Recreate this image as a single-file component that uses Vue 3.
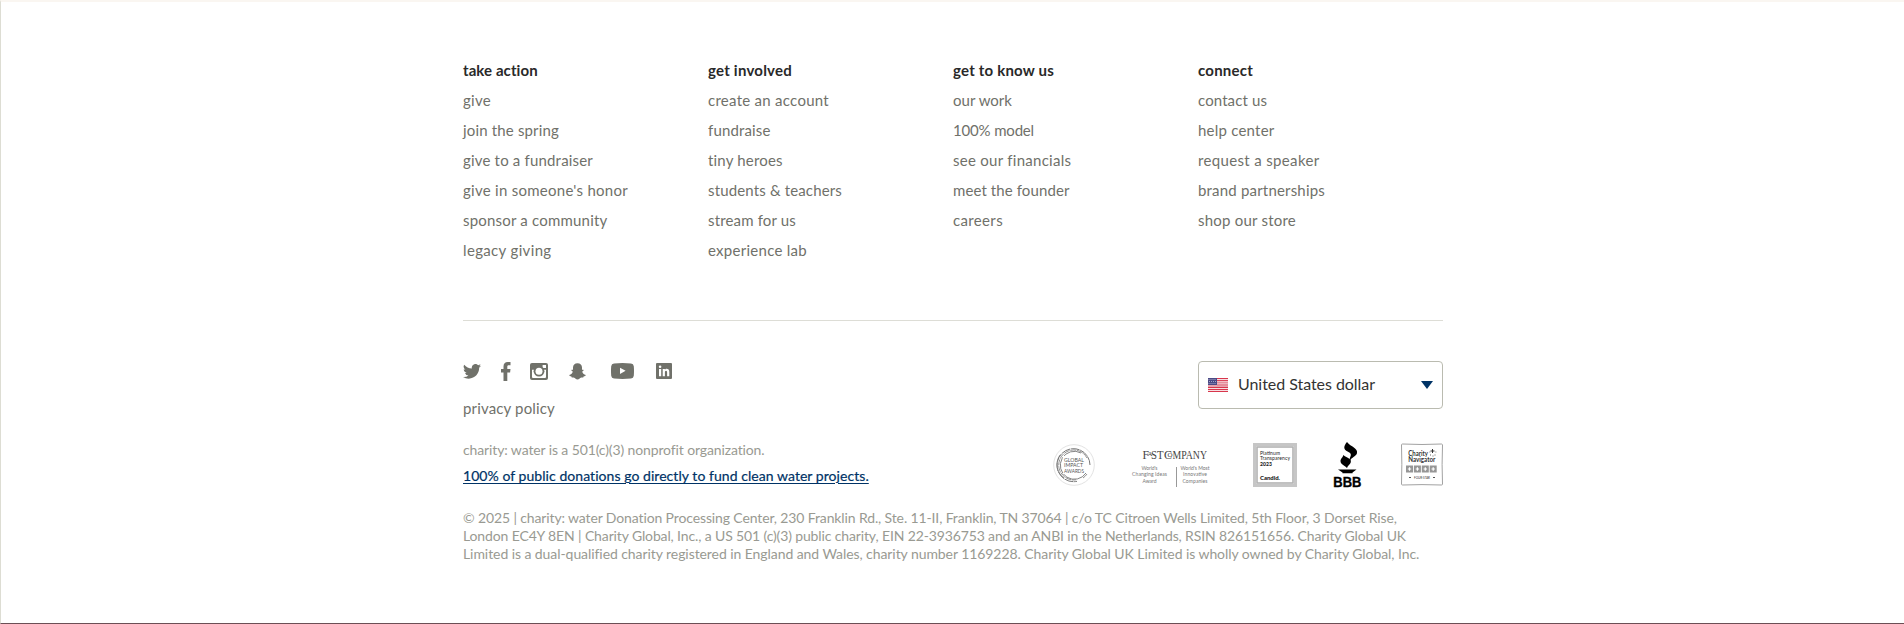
<script setup>
const columns = [
  { title: ['take action', 75], links: [['give', 28], ['join the spring', 96], ['give to a fundraiser', 130], ["give in someone's honor", 165], ['sponsor a community', 144.5], ['legacy giving', 88.5]] },
  { title: ['get involved', 84], links: [['create an account', 121], ['fundraise', 62.5], ['tiny heroes', 75], ['students & teachers', 134], ['stream for us', 88], ['experience lab', 99]] },
  { title: ['get to know us', 101], links: [['our work', 59], ['100% model', 81], ['see our financials', 118], ['meet the founder', 116.5], ['careers', 50]] },
  { title: ['connect', 55], links: [['contact us', 69], ['help center', 76.5], ['request a speaker', 121.5], ['brand partnerships', 127], ['shop our store', 98]] },
]
const legal = [
  ['© 2025 | charity: water Donation Processing Center, 230 Franklin Rd., Ste. 11-II, Franklin, TN 37064 | c/o TC Citroen Wells Limited, 5th Floor, 3 Dorset Rise,', 934],
  ['London EC4Y 8EN | Charity Global, Inc., a US 501 (c)(3) public charity, EIN 22-3936753 and an ANBI in the Netherlands, RSIN 826151656. Charity Global UK', 943],
  ['Limited is a dual-qualified charity registered in England and Wales, charity number 1169228. Charity Global UK Limited is wholly owned by Charity Global, Inc.', 956],
]
// Tracks a line of text so that it fills the given width.
const vFit = {
  mounted(el, { value }) {
    const natural = el.getBoundingClientRect().width
    el.style.letterSpacing = (value - natural) / el.textContent.length + 'px'
  },
}
</script>

<template>
  <footer class="footer">
    <div class="inner">
      <nav class="columns">
        <section v-for="c in columns" :key="c.title[0]" class="column">
          <h3><span v-fit="c.title[1]">{{ c.title[0] }}</span></h3>
          <ul>
            <li v-for="l in c.links" :key="l[0]"><a v-fit="l[1]">{{ l[0] }}</a></li>
          </ul>
        </section>
      </nav>

      <div class="middle">
        <div class="left">
          <div class="social">
            <svg class="tw" width="18" height="15" viewBox="0 0 24 20"><path d="M24 2.400a9.800 9.800 0 0 1-2.830.780A4.930 4.930 0 0 0 23.340.400a9.900 9.900 0 0 1-3.130 1.200 4.920 4.920 0 0 0-8.390 4.480C7.730 5.880 4.100 3.920 1.670.930a4.920 4.920 0 0 0 1.520 6.570 4.900 4.900 0 0 1-2.230-.610c-.050 2.280 1.580 4.410 3.950 4.890a4.900 4.900 0 0 1-2.220.080 4.930 4.930 0 0 0 4.600 3.420A9.900 9.900 0 0 1 0 17.320a13.900 13.900 0 0 0 7.550 2.210c9.140 0 14.300-7.720 13.990-14.640A10 10 0 0 0 24 2.400z" /></svg>
            <svg class="fb" width="10" height="19" viewBox="0 0 10 19"><path d="M2.500 19v-8.500H0V7h2.500V4.500C2.500 1.600 4 0 6.700 0H9.500v3.300H7.700C6.600 3.300 6.300 3.800 6.300 4.800V7h3.200l-.4 3.500H6.300V19z" /></svg>
            <svg class="ig" width="18" height="17" viewBox="0 0 18 17">
              <rect width="18" height="17" rx="2" />
              <path class="cut" d="M2 6.800h14V14a1 1 0 0 1-1 1H3a1 1 0 0 1-1-1zM12.600 2H16v3h-3.400z" />
              <circle cx="9" cy="8.200" r="5.400" />
              <circle class="cut" cx="9" cy="8.200" r="3.500" />
            </svg>
            <svg class="sc" width="17" height="17" viewBox="0 0 17 17"><path d="M8.500.2C11.300.2 13 2 13 4.500v2.200c.6.300 1.200-.2 1.600.3.300.6-.7 1.100-1.400 1.500.4 1.700 1.600 3 3.600 3.600 0 .9-1.100 1.200-2.200 1.400l-.4 1.100c-1.800-.3-2.600.2-3.500.9-1.400 1.200-3 1.200-4.400 0-.9-.7-1.700-1.200-3.500-.9l-.4-1.100C1.300 13.300.2 13 .2 12.100c2-.6 3.200-1.900 3.600-3.600C3.100 8.100 2.100 7.600 2.400 7c.4-.5 1 0 1.600-.3V4.500C4 2 5.700.2 8.500.2z" /></svg>
            <svg class="yt" width="23" height="16" viewBox="0 0 23 16"><path fill-rule="evenodd" d="M3 .5Q11.500-.4 20 .5q2.500.2 2.800 2.800.4 4.700 0 9.400-.3 2.600-2.800 2.800-8.500.9-17 0-2.500-.2-2.800-2.800-.4-4.700 0-9.400Q.5.7 3 .5zM9 4.700v6.200L14.600 7.800z" /></svg>
            <svg class="li" width="16" height="16" viewBox="0 0 16 16"><path fill-rule="evenodd" d="M1 0h14a1 1 0 0 1 1 1v14a1 1 0 0 1-1 1H1a1 1 0 0 1-1-1V1a1 1 0 0 1 1-1zM3 6v7.300h2.200V6zM4.100 2.500a1.300 1.300 0 1 0 0 2.600 1.300 1.300 0 0 0 0-2.600zM6.700 6v7.300h2.200V9.500c0-1 .3-1.700 1.100-1.700s1.100.7 1.100 1.700v3.800h2.200V9c0-2-1-3.200-2.600-3.200-.9 0-1.500.5-1.800 1V6z" /></svg>
          </div>
          <p class="privacy"><a v-fit="92">privacy policy</a></p>
          <p class="nonprofit"><span v-fit="301.5">charity: water is a 501(c)(3) nonprofit organization.</span></p>
          <p class="pledge"><a v-fit="406">100% of public donations go directly to fund clean water projects.</a></p>
        </div>

        <div class="right">
          <div class="currency">
            <svg width="20" height="14" viewBox="0 0 20 14">
              <rect width="20" height="14" fill="#f7dfe2" />
              <path d="M0 .5h20M0 2.600h20M0 11.500h20M0 13.500h20M0 9.500h20" stroke="#d8364c" />
              <path d="M9 4.500h11M9 6.500h11M0 8h20" stroke="#e58e9b" stroke-width="1.600" />
              <rect width="9" height="7" fill="#4b4a86" />
              <path d="M.5 1.500h8M1 3.500h8M.5 5.500h8" stroke="#a5a4c6" stroke-dasharray="1 1" />
            </svg>
            <span class="currency-name"><span v-fit="137">United States dollar</span></span>
            <svg class="caret" width="12" height="8" viewBox="0 0 12 8"><path d="M0 0h12L6 8z" fill="#003366" /></svg>
          </div>

          <div class="badges">
            <svg class="gia" width="42" height="42" viewBox="0 0 42 42">
              <circle cx="21" cy="21" r="20.300" fill="#fff" stroke="#e3e3e3" />
              <g fill="none" stroke="#777">
                <path d="M37 21A16.500 16.500 0 1 0 24 37.300" stroke-width="1" stroke-dasharray="9 .7" />
                <path d="M34 14A15 15 0 1 0 23 35.800" stroke-width=".8" stroke-dasharray="6 .8" />
                <path d="M33 29A14 14 0 1 1 28 9" stroke-width=".9" />
                <path d="M30 34A16 16 0 0 0 34 30M11 34A16.500 16.500 0 0 1 7 11" stroke-width=".8" />
              </g>
              <rect x="10" y="12" width="22" height="18" fill="#fff" />
              <g class="gia-text">
                <text x="11" y="17.500" textLength="20" lengthAdjust="spacingAndGlyphs">GLOBAL</text>
                <text x="11" y="23.300" textLength="19" lengthAdjust="spacingAndGlyphs">IMPACT</text>
                <text x="11" y="29.100" textLength="20" lengthAdjust="spacingAndGlyphs">AWARDS</text>
              </g>
            </svg>
            <svg class="fast" width="80" height="42" viewBox="0 0 80 42">
              <g class="fc">
                <text x="11.500" y="14" textLength="6.500" lengthAdjust="spacingAndGlyphs">F</text>
                <text x="16.500" y="10.500" class="fc-small" textLength="5" lengthAdjust="spacingAndGlyphs">A</text>
                <text x="20" y="14" textLength="12.500" lengthAdjust="spacingAndGlyphs">ST</text>
                <text x="33" y="14" textLength="8" lengthAdjust="spacingAndGlyphs">C</text>
                <text x="36.500" y="12" class="fc-small">O</text>
                <text x="41.500" y="14" textLength="34.500" lengthAdjust="spacingAndGlyphs">MPANY</text>
              </g>
              <path d="M45.500 22v20" stroke="#999" />
              <g class="tiny">
                <text x="18.500" y="24.500" textLength="16">World's</text>
                <text x="18.500" y="31" textLength="35">Changing Ideas</text>
                <text x="18.500" y="37.500" textLength="14">Award</text>
                <text x="64" y="24.500" textLength="29">World's Most</text>
                <text x="64" y="31" textLength="24">Innovative</text>
                <text x="64" y="37.500" textLength="25">Companies</text>
              </g>
            </svg>
            <svg class="candid" width="44" height="44" viewBox="0 0 44 44">
              <rect x="1.500" y="1.500" width="41" height="41" fill="#fff" stroke="#c6c6c6" stroke-width="3" />
              <rect x="4" y="4" width="36" height="36" fill="none" stroke="#b2b2b2" stroke-width="1.600" />
              <g class="candid-text">
                <text x="7" y="11.500" textLength="20">Platinum</text>
                <text x="7" y="17.300" textLength="30">Transparency</text>
                <text x="7" y="23" textLength="12" class="bold">2023</text>
                <text x="7" y="36.500" textLength="20" class="bold name">Candid.</text>
              </g>
            </svg>
            <svg class="bbb" width="30" height="46" viewBox="0 0 30 46">
              <path d="M14 0c4 5 11 6 10 11-.5 3.400-5.500 4-7.300 8.200C15.500 15.500 21 12.500 15 9.800 9.500 7.200 11 3.500 14 0z" />
              <path d="M10.300 13c3 3 8.500 3.200 7.500 7.200-.6 2.400-3 3-3.800 5.900-2.500-3-6.500-3.500-6.500-7 0-2.700 2.300-3.200 2.800-6.100zM5 27.500h18.500l-4 3v.8h-10v-.8z" />
              <text x=".3" y="44.500" textLength="28" lengthAdjust="spacingAndGlyphs">BBB</text>
            </svg>
            <svg class="nav" width="42" height="43" viewBox="0 0 42 43">
              <path d="M1.500 1Q21 2 40.500 1q1 .2 1 1-.8 19.500 0 39 0 1-1 1-19.500-.8-39 0-1 0-1-1Q1.200 21 .5 2q0-1 1-1z" fill="#fff" stroke="#a2a2a2" />
              <g class="nav-text">
                <text x="7.300" y="13" textLength="19.500" lengthAdjust="spacingAndGlyphs">Charity</text>
                <text x="7.300" y="18.600" textLength="27" lengthAdjust="spacingAndGlyphs">Navigator</text>
              </g>
              <path d="M31.500 6v4M29.500 8h4" stroke="#333" />
              <path d="M29 12h1M33.500 12h1M31.500 13h1M28.500 9h.8M34.500 9h.8" stroke="#666" />
              <g v-for="i in 4" :key="i" :transform="`translate(${5 + (i - 1) * 7.900} 22.500)`">
                <rect width="7" height="7" fill="#969696" />
                <path d="M3.500 1.800v3.400M1.800 3.500h3.400" stroke="#fff" stroke-width="1.200" />
              </g>
              <text class="four-star" x="21" y="35.600" textLength="16">FOUR-STAR</text>
              <path d="M8 34.500h2M32 34.500h2" stroke="#555" />
            </svg>
          </div>
        </div>
      </div>

      <div class="legal">
        <p v-for="l in legal" :key="l[1]"><span v-fit="l[1]">{{ l[0] }}</span></p>
      </div>
    </div>
  </footer>
</template>

<style>
body { margin: 0; background: #fff; }
</style>

<style scoped>
.footer { box-sizing: border-box; height: 624px; border-top: 2px solid #faf6f1; border-left: 1px solid #ddddd3; border-bottom: 1px solid #6b4f55; overflow: hidden; font-family: Lato, "Liberation Sans", sans-serif; font-size: 15px; color: #70716a; }
h3, p, ul { margin: 0; padding: 0; list-style: none; }
h3, p, li { white-space: nowrap; }
.inner { width: 980px; margin: 0 auto 0 462px; padding-top: 53px; }
.columns { display: grid; grid-template-columns: repeat(4, 245px); height: 265px; border-bottom: 1px solid #ddddd6; }
.column { line-height: 30px; }
h3 { font-size: 15px; font-weight: 700; color: #292929; }
.middle { display: flex; justify-content: space-between; padding-top: 40px; }
.social { display: flex; align-items: center; height: 20px; fill: #70716a; }
.fb { margin-left: 20px; }
.ig { margin-left: 19px; }
.ig .cut { fill: #fff; }
.sc { margin-left: 21px; }
.yt { margin-left: 25px; }
.li { margin-left: 22px; }
.privacy { margin-top: 12px; line-height: 30px; }
.nonprofit { margin-top: 14px; font-size: 14px; line-height: 26px; color: #999a92; }
.pledge { font-size: 14px; line-height: 26px; color: #003366; -webkit-text-stroke: .2px #003366; }
.pledge a { text-decoration: underline; text-underline-offset: 2px; text-decoration-thickness: 1px; text-decoration-skip-ink: auto; }
.currency { box-sizing: border-box; width: 245px; height: 48px; margin-left: auto; display: flex; align-items: center; padding: 0 9px; border: 1px solid #babbb0; border-radius: 4px; }
.currency-name { margin-left: 10px; margin-top: -3px; font-size: 16px; color: #333; }
.caret { margin-left: auto; }
.badges { display: flex; margin-top: 34px; height: 46px; align-items: flex-start; }
.fast { margin-left: 36px; overflow: visible; margin-top: 2px; }
.candid { margin-left: 42px; }
.bbb { margin-left: 36px; margin-top: -1px; overflow: visible; }
.nav { margin-left: 38px; }
.badges text { font-family: Lato, sans-serif; }
.gia { margin-top: 1px; }
.gia-text text { font-size: 6.500px; fill: #555; }
.fc text { font-family: "Liberation Serif", serif; font-size: 13px; fill: #444; }
.fc .fc-small { font-size: 7px; }
.tiny text { font-size: 5px; fill: #777; text-anchor: middle; }
.candid-text text { font-size: 5px; fill: #222; }
.candid-text .bold { font-weight: 900; }
.candid-text .name { font-size: 6px; }
.bbb text { font-family: "Liberation Sans", sans-serif; font-size: 14.500px; font-weight: 700; stroke: #000; stroke-width: .4px; }
.nav-text text { font-size: 6.500px; font-weight: 700; fill: #333; }
.nav .four-star { font-size: 3px; text-anchor: middle; fill: #333; }
.legal { margin-top: 20px; font-size: 14px; line-height: 18px; color: #999a92; }
</style>
